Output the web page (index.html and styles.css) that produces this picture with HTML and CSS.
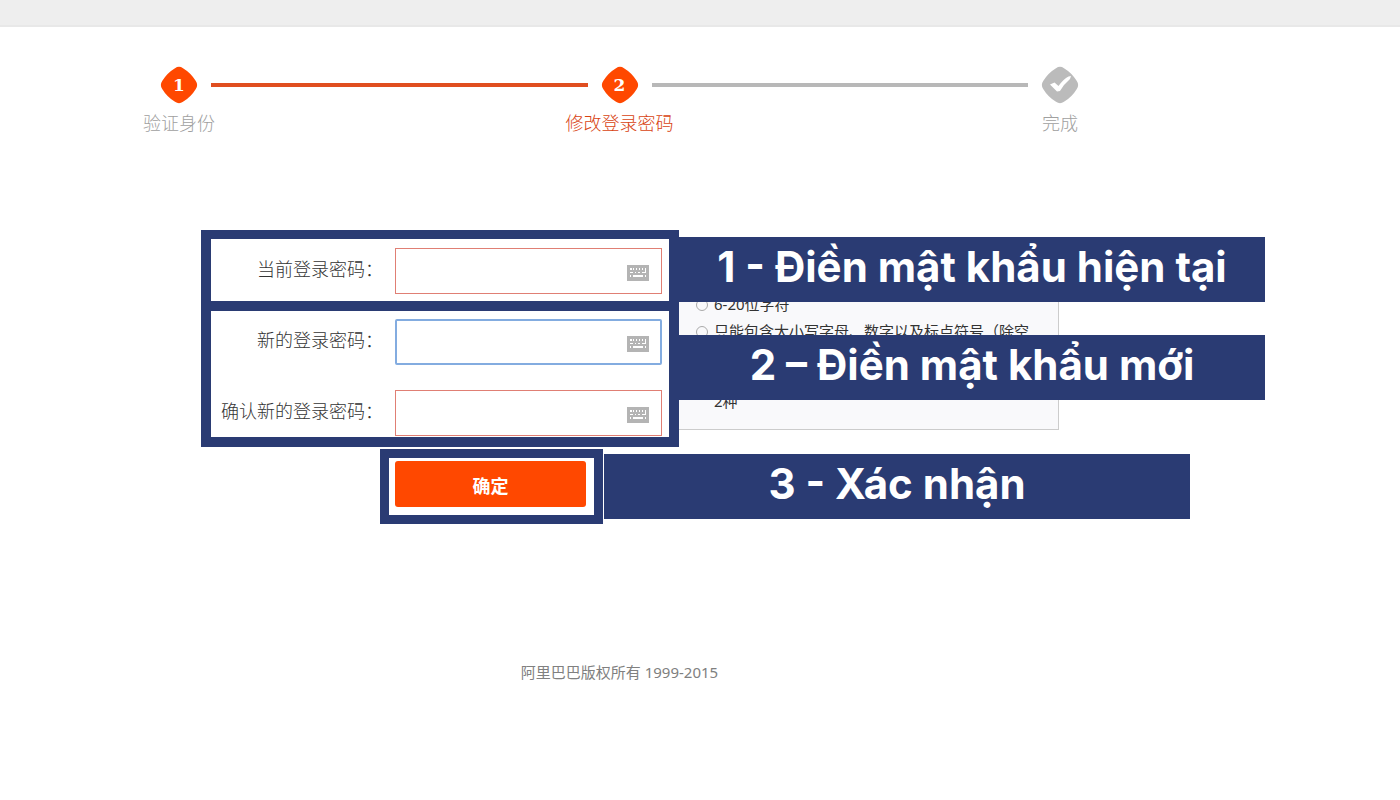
FILE: index.html
```html
<!DOCTYPE html>
<html lang="zh-CN">
<head>
    <meta charset="UTF-8">
    <meta name="viewport" content="width=device-width, initial-scale=1.0">
    <title>修改登录密码</title>
    <link rel="stylesheet" href="styles.css">
</head>
<body>
    <svg class="sprite" aria-hidden="true">
        <symbol id="diamond" viewBox="0 0 38 38">
            <path d="M15 2.200Q19-.5 23 2.200Q31 7 35.800 15Q38.500 19 35.800 23Q31 31 23 35.800Q19 38.500 15 35.800Q7 31 2.200 23Q-.5 19 2.200 15Q7 7 15 2.200Z"/>
        </symbol>
        <symbol id="keyboard" viewBox="0 0 22 16">
            <path fill="#b4b4b4" d="M0 0h22v16H0z"/>
            <path fill="#fff" d="M3 3h2v2H3zM6 3h1v2H6zM9 3h1v2H9zM12 3h1v2h-1zM15 3h1v2h-1zM18 3h1v5h-4V7h3zM3 7h3v1H3zM8 7h1v1H8zM11 7h2v1h-2zM3 10h1v2H3zM6 10h10v2H6zM18 10h1v2h-1z"/>
        </symbol>
    </svg>
    <header class="topbar"></header>
    <main class="page">
        <ol class="steps">
            <li class="step">
                <span class="step-mark">
                    <svg><use href="#diamond"/></svg>
                    <b>1</b>
                </span>
                <span class="step-label">验证身份</span>
            </li>
            <li class="step-line done"></li>
            <li class="step current">
                <span class="step-mark">
                    <svg><use href="#diamond"/></svg>
                    <b>2</b>
                </span>
                <span class="step-label">修改登录密码</span>
            </li>
            <li class="step-line"></li>
            <li class="step last">
                <span class="step-mark">
                    <svg viewBox="0 0 38 38">
                        <use href="#diamond"/>
                        <path fill="#fff" d="M9 18.500l4.500-2 4 3.500q5-7 10-9.500l2.500-.5-1 3q-6 5-10 12l-3 .5z"/>
                    </svg>
                </span>
                <span class="step-label">完成</span>
            </li>
        </ol>

        <form class="password-form">
            <div class="fields-row">
                <div class="fields">
                    <div class="group first">
                        <div class="field">
                            <label for="current">当前登录密码：</label>
                            <div class="input-wrap">
                                <input type="password" id="current">
                                <button type="button" class="keyboard" aria-label="键盘"><svg><use href="#keyboard"/></svg></button>
                            </div>
                        </div>
                    </div>
                    <div class="group second">
                        <div class="field">
                            <label for="new">新的登录密码：</label>
                            <div class="input-wrap">
                                <input type="password" id="new" class="active">
                                <button type="button" class="keyboard" aria-label="键盘"><svg><use href="#keyboard"/></svg></button>
                            </div>
                        </div>
                        <div class="field">
                            <label for="confirm">确认新的登录密码：</label>
                            <div class="input-wrap">
                                <input type="password" id="confirm">
                                <button type="button" class="keyboard" aria-label="键盘"><svg><use href="#keyboard"/></svg></button>
                            </div>
                        </div>
                    </div>
                </div>
                <div class="hints">
                    <ul class="rules">
                        <li>6-20位字符</li>
                        <li>只能包含大小写字母、数字以及标点符号（除空</li>
                        <li class="rest">2种</li>
                    </ul>
                    <div class="note note-current" lang="vi">1 - Điền mật khẩu hiện tại</div>
                    <div class="note note-new" lang="vi">2 – Điền mật khẩu mới</div>
                </div>
            </div>
            <div class="submit-row">
                <div class="submit-frame">
                    <button type="submit" class="submit">确定</button>
                </div>
                <div class="note" lang="vi">3 - Xác nhận</div>
            </div>
        </form>

        <footer>阿里巴巴版权所有 1999-2015</footer>
    </main>
</body>
</html>
```
FILE: styles.css
```css
* {
    box-sizing: border-box;
}
body {
    margin: 0;
    background-color: #fff;
    color: #333;
    font-family: "Noto Sans", "Noto Sans CJK SC", sans-serif;
    font-size: 18px;
}
.sprite {
    position: absolute;
    width: 0;
    height: 0;
}
.topbar {
    height: 27px;
    background-color: #eee;
    border-bottom: 2px solid #e8e8e8;
}
.page {
    max-width: 1239px;
}

/* progress */
.steps {
    display: flex;
    list-style: none;
    margin: 0;
    padding: 39px 160px 0;
}
.step {
    display: flex;
    flex-direction: column;
    align-items: center;
    width: 38px;
    color: #a0a0a0;
}
.step-mark {
    display: grid;
    place-items: center;
    width: 38px;
    height: 38px;
    color: #fff;
    font-family: "DejaVu Serif", serif;
    font-size: 17px;
    line-height: 34px;
}
.step-mark > * {
    grid-area: 1 / 1;
}
.step-mark svg {
    width: 38px;
    height: 38px;
    fill: #ff4800;
}
.step-mark b {
    z-index: 1;
}
.last .step-mark svg {
    fill: #bbb;
}
.step-label {
    margin-top: 6px;
    line-height: 26px;
    font-weight: 300;
    white-space: nowrap;
}
.current .step-label {
    color: #d84312;
}
.step-line {
    flex: 1;
    height: 4px;
    margin: 17px 13px 0;
    background-color: #b8b8b8;
}
.step-line.done {
    background-color: #e04e20;
}

/* form */
.password-form {
    padding: 94px 0 0 201px;
}
.fields-row {
    display: flex;
}
.fields {
    flex: none;
    width: 478px;
    border: 10px solid #2a3b73;
    border-top-width: 9px;
}
.group {
    display: flex;
    flex-direction: column;
    gap: 25px;
    padding-right: 7px;
}
.first {
    padding-top: 9px;
    padding-bottom: 7px;
    border-bottom: 10px solid #2a3b73;
}
.second {
    padding-top: 8px;
    padding-bottom: 1px;
}
.field {
    display: flex;
    justify-content: flex-end;
    gap: 12px;
}
.field label {
    line-height: 42px;
    font-weight: 300;
    white-space: nowrap;
}
.input-wrap {
    position: relative;
    width: 267px;
}
.input-wrap input {
    display: block;
    width: 100%;
    height: 46px;
    padding: 0 44px 0 10px;
    border: 1px solid #e07f74;
    outline: none;
    font-size: 18px;
}
.input-wrap .active {
    border: 2px solid #83ace0;
    border-radius: 2px;
}
.keyboard {
    position: absolute;
    top: 17px;
    right: 13px;
    width: 22px;
    height: 16px;
    padding: 0;
    border: none;
    background: none;
}
.keyboard svg {
    display: block;
    width: 22px;
    height: 16px;
}

/* rules and the notes over them */
.hints {
    position: relative;
    width: 380px;
    margin: 7px 0 17px;
    padding-top: 55px;
    background-color: #f9f9fb;
    border: 1px solid #ccc;
    border-left: none;
}
.rules {
    list-style: none;
    margin: 0;
    padding: 0 0 0 35px;
    font-size: 15px;
    line-height: 23px;
    white-space: nowrap;
}
.rules li {
    position: relative;
    margin-bottom: 4px;
}
.rules li::before {
    content: "";
    position: absolute;
    left: -18px;
    top: 6px;
    width: 10px;
    height: 10px;
    border: 1px solid #aaa;
    border-radius: 50%;
}
.rules .rest {
    margin-top: 47px;
}
.rules .rest::before {
    display: none;
}
.note {
    width: 586px;
    height: 65px;
    background-color: #2a3b73;
    color: #fff;
    font-family: Inter, sans-serif;
    font-size: 42px;
    font-weight: 700;
    line-height: 60px;
    text-align: center;
    white-space: nowrap;
}
.note-current,
.note-new {
    position: absolute;
    left: 0;
}
.note-current {
    top: -1px;
}
.note-new {
    top: 97px;
}
.submit-row {
    display: flex;
    align-items: center;
    gap: 1px;
    margin: 2px 0 0 179px;
}
.submit-frame {
    padding: 3px 8px 8px 6px;
    border: 9px solid #2a3b73;
}
.submit {
    display: block;
    width: 191px;
    height: 46px;
    padding: 2px 0 0;
    border: none;
    border-radius: 3px;
    background-color: #ff4800;
    color: #fff;
    font-family: inherit;
    font-size: 18px;
    font-weight: 700;
    cursor: pointer;
}

footer {
    margin-top: 136px;
    color: #808080;
    font-size: 15px;
    line-height: 24px;
    text-align: center;
}
```
